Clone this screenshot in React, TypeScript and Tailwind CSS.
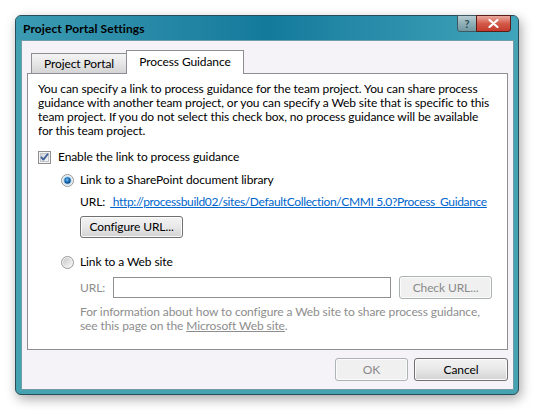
import React from "react";

function CheckBox() {
  return (
    <svg width="13" height="13" viewBox="0 0 13 13">
      <defs>
        <linearGradient id="cbg" x1="0" y1="0" x2="1" y2="1">
          <stop offset="0" stopColor="#cfd3d8" />
          <stop offset="1" stopColor="#f4f5f7" />
        </linearGradient>
      </defs>
      <rect x="0.5" y="0.5" width="12" height="12" fill="#f4f4f4" stroke="#8f8f8f" />
      <rect x="2.5" y="2.5" width="8" height="8" fill="url(#cbg)" stroke="#c3c7cc" />
      <path d="M3.4 6.4 L5.4 8.6 L9.6 3.2" fill="none" stroke="#3f5f98" strokeWidth="1.8" strokeLinecap="round" strokeLinejoin="round" />
    </svg>
  );
}

function Radio({ checked }: { checked: boolean }) {
  return (
    <svg width="13" height="13" viewBox="0 0 13 13">
      <defs>
        <linearGradient id={checked ? "rg1" : "rg0"} x1="0" y1="0" x2="1" y2="1">
          <stop offset="0" stopColor="#c8c8c8" />
          <stop offset="1" stopColor="#f7f7f7" />
        </linearGradient>
        <radialGradient id="rdot" cx="0.45" cy="0.4" r="0.6">
          <stop offset="0" stopColor="#7fc3f2" />
          <stop offset="0.55" stopColor="#1a6fb8" />
          <stop offset="1" stopColor="#0d3f73" />
        </radialGradient>
      </defs>
      <circle cx="6.5" cy="6.5" r="6" fill="#f2f2f2" stroke="#979797" />
      <circle cx="6.5" cy="6.5" r="4.5" fill={checked ? "#bfe0f6" : `url(#rg0)`} />
      {checked && <circle cx="6.5" cy="6.5" r="3.2" fill="url(#rdot)" />}
    </svg>
  );
}

const btn =
  "flex items-center justify-center rounded-[3px] border border-[#707070] bg-gradient-to-b from-[#f3f3f3] via-[#e8e8e8] to-[#d2d2d2] shadow-[inset_0_0_0_1px_#fbfbfb] text-black";
const btnDis =
  "flex items-center justify-center rounded-[3px] border border-[#adb2b5] bg-[#f0f0f0] shadow-[inset_0_0_0_1px_#fbfbfb] text-[#8a8a8a]";

export default function App() {
  return (
    <div className="w-[535px] h-[410px] bg-white pl-[15px] pt-[15px] font-['Lato',sans-serif] text-[12px] leading-[14px] tracking-[-0.1px] text-black">
      <div className="w-[504px] h-[380px] rounded-[6px] border border-[#2b4d57] bg-[#45a3b1] shadow-[2px_4px_12px_rgba(0,0,0,0.35)] flex flex-col">
        {/* title bar */}
        <div className="h-[24px] flex items-start justify-between rounded-t-[5px] bg-gradient-to-r from-[#3b9bb3] via-[#137a9c] to-[#40a5bb]">
          <div className="pl-[7px] pt-[6px] font-bold tracking-[0.1px]">Project Portal Settings</div>
          <div className="flex pr-[7px] -mt-px">
            <div className="w-[20px] h-[17px] rounded-bl-[3px] border border-[#3d5a62] bg-gradient-to-b from-[#b9cdd2] via-[#8fb0b8] to-[#6f96a0] flex items-center justify-center text-[11px] font-bold text-[#2d4a52] leading-none">
              ?
            </div>
            <div className="w-[35px] h-[17px] -ml-px rounded-br-[3px] border border-[#5a1d18] bg-gradient-to-b from-[#e9a99f] via-[#d45a4a] to-[#c23a2a] flex items-center justify-center">
              <svg width="11" height="9" viewBox="0 0 11 9">
                <path d="M1.5 1 L9.5 8 M9.5 1 L1.5 8" stroke="#ffffff" strokeWidth="2.2" strokeLinecap="round" />
              </svg>
            </div>
          </div>
        </div>

        {/* client area */}
        <div className="ml-[5px] w-[493px] h-[350px] border border-[#6f9ea8] bg-[#f5f3f7] px-[5px] pt-[9px] flex flex-col">
          {/* tabs */}
          <div className="h-[23px] flex items-end pl-[4px]">
            <div className="w-[96px] h-[20px] border border-b-0 border-[#8c8e94] bg-gradient-to-b from-[#f4f4f4] via-[#e6e6e6] to-[#d4d4d4] flex items-center justify-center">
              Project Portal
            </div>
            <div className="relative z-10 -ml-px -mb-px w-[118px] h-[24px] border border-b-0 border-[#8c8e94] bg-white flex items-center justify-center pb-[1px]">
              Process Guidance
            </div>
          </div>

          {/* panel */}
          <div className="h-[277px] border border-[#8c8e94] bg-white pl-[10px] pt-[8px]">
            <p className="whitespace-nowrap">
              You can specify a link to process guidance for the team project. You can share process
              <br />
              guidance with another team project, or you can specify a Web site that is specific to this
              <br />
              team project. If you do not select this check box, no process guidance will be available
              <br />
              for this team project.
            </p>

            <div className="mt-[11px] h-[16px] flex items-center gap-[7px]">
              <CheckBox />
              <span>Enable the link to process guidance</span>
            </div>

            <div className="pl-[23px]">
              <div className="mt-[7px] h-[16px] flex items-center gap-[6px]">
                <Radio checked />
                <span>Link to a SharePoint document library</span>
              </div>

              <div className="pl-[19px]">
                <div className="mt-[6px] h-[16px] flex items-center">
                  <span>URL:</span>
                  <a className="ml-[5px] text-[#0066cc] underline whitespace-pre tracking-[-0.35px]">
                    {" http://processbuild02/sites/DefaultCollection/CMMI 5.0?Process_Guidance"}
                  </a>
                </div>
                <div className="mt-[6px]">
                  <div className={`${btn} w-[103px] h-[22px]`}>Configure URL...</div>
                </div>
              </div>

              <div className="mt-[16px] h-[16px] flex items-center gap-[6px]">
                <Radio checked={false} />
                <span>Link to a Web site</span>
              </div>

              <div className="pl-[19px]">
                <div className="mt-[6px] h-[23px] flex items-center">
                  <span className="w-[33px] text-[#8d8d8d]">URL:</span>
                  <div className="w-[278px] h-[21px] border border-[#8e8f8f] bg-white" />
                  <div className={`${btnDis} ml-[8px] w-[93px] h-[23px]`}>Check URL...</div>
                </div>
                <p className="mt-[6px] text-[#8d8d8d] whitespace-nowrap">
                  For information about how to configure a Web site to share process guidance,
                  <br />
                  see this page on the <span className="underline">Microsoft Web site</span>.
                </p>
              </div>
            </div>
          </div>

          {/* buttons */}
          <div className="mt-[8px] flex justify-end gap-[6px]">
            <div className={`${btnDis} w-[73px] h-[23px]`}>OK</div>
            <div className={`${btn} w-[94px] h-[23px]`}>Cancel</div>
          </div>
        </div>
      </div>
    </div>
  );
}
